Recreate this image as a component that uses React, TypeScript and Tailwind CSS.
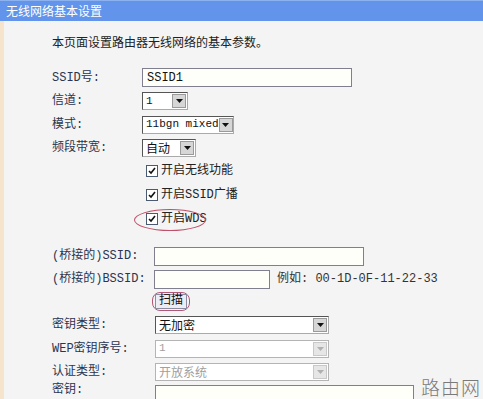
import React from "react"

const FONT = '"Liberation Mono", "Noto Sans CJK SC", monospace'
const CJK = '"Noto Sans CJK SC", "Liberation Sans", sans-serif'

const Arrow = ({ disabled }: { disabled?: boolean }) => (
  <div
    className={
      "w-[14px] h-[14px] shrink-0 flex items-center justify-center border " +
      (disabled
        ? "bg-[#e6e6e6] border-[#c8c8c8]"
        : "bg-[#d6d6d6] border-[#9a9a9a]")
    }
  >
    <svg width="7" height="4" viewBox="0 0 7 4">
      <path d="M0 0h7L3.5 4z" fill={disabled ? "#b0b0b0" : "#111"} />
    </svg>
  </div>
)

const Select = ({
  value,
  width,
  disabled,
  cjk,
}: {
  value: string
  width: number
  disabled?: boolean
  cjk?: boolean
}) => (
  <div
    style={{ width }}
    className={
      "h-[18px] flex items-center justify-between bg-white pl-[3px] pr-[1px] border " +
      (disabled
        ? "border-[#b4b4b4] text-[#a0a0a0]"
        : "border-t-[#555] border-l-[#555] border-r-[#aaa] border-b-[#aaa] text-[#111]")
    }
  >
    <span
      className={
        "leading-none whitespace-nowrap " + (cjk ? "text-[12px]" : "text-[11px]")
      }
      style={{ fontFamily: cjk ? CJK : FONT }}
    >
      {value}
    </span>
    <Arrow disabled={disabled} />
  </div>
)

const Input = ({ width, value }: { width: number; value?: string }) => (
  <div
    style={{ width }}
    className="h-[19px] shrink-0 bg-[#fffffa] border border-[#7f7f8f] flex items-center pl-[4px] text-[12px] text-[#111]"
  >
    {value}
  </div>
)

const Check = () => (
  <div className="w-[12px] h-[12px] border border-[#4a5a70] bg-white flex items-center justify-center">
    <svg width="8" height="8" viewBox="0 0 8 8">
      <path d="M1 4l2 2 4-5" stroke="#111" strokeWidth="1.6" fill="none" />
    </svg>
  </div>
)

const Row = ({
  label,
  h,
  lw = 90,
  children,
}: {
  label?: string
  h: number
  lw?: number
  children?: React.ReactNode
}) => (
  <div style={{ height: h }} className="flex items-center">
    <div
      style={{ width: lw }}
      className="text-[12px] text-[#2b3550] shrink-0 whitespace-nowrap"
    >
      {label}
    </div>
    {children}
  </div>
)

export default function App() {
  return (
    <div
      className="w-[483px] h-[399px] overflow-hidden bg-[#f4f4f4] relative"
      style={{ fontFamily: FONT }}
    >
      <div className="h-[21px] bg-[#6194ea] border-t border-[#8cb2f0] flex items-center pl-[6px]">
        <span className="text-white text-[12px]" style={{ fontFamily: CJK }}>
          无线网络基本设置
        </span>
      </div>
      <div className="flex">
        <div className="w-[4px] bg-[#f6e4cc] self-stretch" />
        <div className="pl-[48px] flex-1">
          <div className="h-[24px] mt-[11px] flex items-center text-[12px] text-[#222]">
            本页面设置路由器无线网络的基本参数。
          </div>
          <div className="mt-[10px]">
            <Row label="SSID号:" h={23}>
              <Input width={210} value="SSID1" />
            </Row>
            <Row label="信道:" h={24}>
              <Select value="1" width={46} />
            </Row>
            <Row label="模式:" h={23}>
              <Select value="11bgn mixed" width={92} />
            </Row>
            <Row label="频段带宽:" h={23}>
              <Select value="自动" width={54} cjk />
            </Row>
            {["开启无线功能", "开启SSID广播", "开启WDS"].map((t) => (
              <Row key={t} h={24}>
                <div className="pl-[4px] flex items-center gap-[3px] text-[12px] text-[#222]">
                  <Check />
                  <span>{t}</span>
                </div>
              </Row>
            ))}
          </div>
          <div className="mt-[13px]">
            <Row label="(桥接的)SSID:" lw={102} h={24}>
              <Input width={210} />
            </Row>
            <Row label="(桥接的)BSSID:" lw={102} h={22}>
              <Input width={116} />
              <span className="ml-[7px] text-[12px] text-[#333]">
                例如: 00-1D-0F-11-22-33
              </span>
            </Row>
            <Row lw={100} h={22}>
              <div className="rounded-[8px] border border-[#b05878] px-[2px] py-[1px]">
                <div className="h-[15px] px-[3px] bg-[#ececf4] border border-[#8c8ca0] flex items-center text-[12px] text-[#111]">
                  扫描
                </div>
              </div>
            </Row>
            <div className="mt-[1px]">
              <Row label="密钥类型:" lw={103} h={24}>
                <Select value="无加密" width={174} cjk />
              </Row>
              <Row label="WEP密钥序号:" lw={103} h={23}>
                <Select value="1" width={174} disabled />
              </Row>
              <Row label="认证类型:" lw={103} h={23}>
                <Select value="开放系统" width={174} disabled cjk />
              </Row>
              <div className="flex items-start h-[16px]">
                <div className="w-[103px] shrink-0 text-[12px] leading-[14px] text-[#2b3550]">
                  密钥:
                </div>
                <div className="pt-[2px]">
                  <Input width={259} />
                </div>
              </div>
            </div>
          </div>
        </div>
      </div>
      <div className="absolute left-[134px] top-[209px] w-[72px] h-[22px] rounded-[50%] border border-[#c0506a]" />
      <div
        className="absolute left-[421px] top-[377px] text-[19px] leading-none text-[#7a7a7a] font-light tracking-[1px]"
        style={{ fontFamily: CJK }}
      >
        路由网
      </div>
    </div>
  )
}
